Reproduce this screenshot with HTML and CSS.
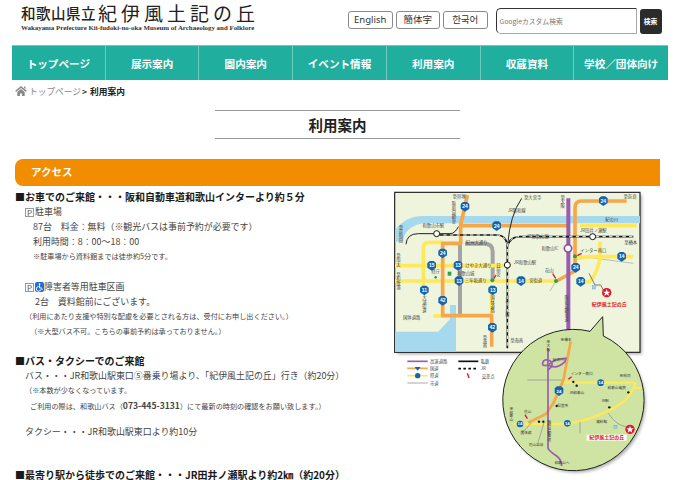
FILE: index.html
```html
<!DOCTYPE html>
<html lang="ja">
<head>
<meta charset="utf-8">
<title>利用案内</title>
<link rel="stylesheet" href="styles.css">
</head>
<body>
<header class="top">
  <div class="logo">
    <div class="logo-main"><span class="logo-pre">和歌山県立</span><span class="logo-name">紀伊風土記の丘</span></div>
    <div class="logo-sub">Wakayama Prefecture Kii-fudoki-no-oka Museum of Archaeology and Folklore</div>
  </div>
  <div class="langs">
    <a class="lang">English</a>
    <a class="lang">簡体字</a>
    <a class="lang">한국어</a>
  </div>
  <div class="search">
    <div class="search-input">Googleカスタム検索</div>
    <div class="search-btn">検索</div>
  </div>
</header>
<nav class="nav">
  <a class="nav-item">トップページ</a>
  <a class="nav-item">展示案内</a>
  <a class="nav-item">園内案内</a>
  <a class="nav-item">イベント情報</a>
  <a class="nav-item">利用案内</a>
  <a class="nav-item">収蔵資料</a>
  <a class="nav-item">学校／団体向け</a>
</nav>
<div class="crumbs">
  <svg class="home" viewBox="0 0 12 10"><path d="M6 0 L12 5 L10.6 5.8 L6 2 L1.4 5.8 L0 5 Z M2.3 6 L6 3 L9.7 6 L9.7 10 L7 10 L7 7.5 L5 7.5 L5 10 L2.3 10 Z M9 .6 H10.4 V3 L9 1.9 Z"/></svg>
  <span class="crumb-link">トップページ</span><span class="crumb-sep">&gt;</span><strong class="crumb-now">利用案内</strong>
</div>
<h1 class="title">利用案内</h1>
<h2 class="bar">アクセス</h2>
<main class="row">
  <div class="text">
    <h3 class="head">■お車でのご来館・・・阪和自動車道和歌山インターより約５分</h3>
    <p class="line in1"><span class="pk">P</span>駐車場</p>
    <p class="line in2">87台　料金：無料（※観光バスは事前予約が必要です）</p>
    <p class="line in2">利用時間：8：00～18：00</p>
    <p class="line in2 small">※駐車場から資料館までは徒歩約5分です。</p>
    <p class="line in1 gap"><span class="pk">P</span><span class="wc"><svg class="wc-ico" viewBox="0 0 10 10"><circle cx="5" cy="1.7" r="1"/><path class="wc-line" d="M5 3 V6 H7.3 L8 8.3 M4 4.5 A2.6 2.6 0 1 0 6.6 7.6"/></svg></span>障害者等用駐車区画</p>
    <p class="line in2">&nbsp;2台　資料館前にございます。</p>
    <p class="line in1 small">（利用にあたり支援や特別な配慮を必要とされる方は、受付にお申し出ください。）</p>
    <p class="line in3 small">（※大型バス不可。こちらの事前予約は承っておりません。）</p>
    <h3 class="head sec">■バス・タクシーでのご来館</h3>
    <p class="line in1">バス・・・JR和歌山駅東口⑤番乗り場より、「紀伊風土記の丘」行き（約20分）</p>
    <p class="line in1 small">（※本数が少なくなっています。</p>
    <p class="line in3 small">ご利用の際は、和歌山バス（<b class="tel">073-445-3131</b>）にて最新の時刻の確認をお願い致します。）</p>
    <p class="line in1 gap2">タクシー・・・JR和歌山駅東口より約10分</p>
    <h3 class="head sec2">■最寄り駅から徒歩でのご来館・・・JR田井ノ瀬駅より約2㎞（約20分）</h3>
  </div>
  <svg class="map" viewBox="0 3 870 885" role="img" aria-label="アクセスマップ">
    <defs>
      <polygon id="hx" points="-13,-8 -6,-14 6,-14 13,-8 13,6 0,15 -13,6"/>
      <filter id="soft" x="-20%" y="-20%" width="140%" height="140%"><feGaussianBlur stdDeviation="5"/></filter>
    </defs>
    <rect class="shadow" x="22" y="30" width="734" height="478" filter="url(#soft)"/>
    <rect class="land" x="14" y="22" width="736" height="480"/>
    <path class="water" d="M15 170 V135 C35 110 60 93 100 93 H750 V115 H100 C70 118 40 140 40 170 Z"/>
    <path class="water" d="M15 440 H145 L180 402 V360 H198 V500 H15 Z"/>
    <g class="rd grey">
      <path d="M210 175 V392"/>
      <path d="M225 176 H285 Q308 176 308 200 V285"/>
      <path class="thin" d="M580 215 L730 235"/>
      <path class="thin" d="M480 318 L500 285"/>
    </g>
    <g class="rd yel">
      <path d="M15 242 H350"/>
      <path d="M15 288 H500"/>
      <path d="M100 320 V190 Q100 172 118 172 H160"/>
      <path d="M130 393 H160"/>
      <path d="M552 220 L600 215 H730"/>
      <path d="M630 170 V215 Q625 260 600 290 H572"/>
      <path d="M570 122 H740"/>
      <path d="M305 300 V392"/>
    </g>
    <g class="rd ora">
      <path d="M232 30 L212 120 V175 H158 V392 H305 V485"/>
      <path d="M212 122 H535"/>
      <path d="M710 48 H575 Q555 48 555 68 V258 L500 288"/>
    </g>
    <path class="rd pur" d="M535 40 V440"/>
    <path class="pvt" d="M48 178 Q50 146 85 146 H180 Q195 146 205 125"/>
    <path class="pvt" d="M395 40 Q360 90 353 180"/>
    <g class="jr">
      <path class="jr-b" d="M140 150 H320 Q352 150 352 190 V490"/>
      <path class="jr-b" d="M352 185 Q360 155 390 155 H730"/>
      <path class="jr-w" d="M140 150 H320 Q352 150 352 190 V490"/>
      <path class="jr-w" d="M352 185 Q360 155 390 155 H730"/>
    </g>
    <circle class="st" cx="140" cy="146" r="9"/>
    <circle class="st" cx="352" cy="240" r="9"/>
    <circle class="st" cx="608" cy="155" r="9"/>
    <circle class="ic" cx="534" cy="190" r="11"/>
    <g class="hexes">
      <use href="#hx" x="225" y="65"/><use href="#hx" x="320" y="123"/><use href="#hx" x="640" y="48"/>
      <use href="#hx" x="158" y="205"/><use href="#hx" x="125" y="242"/><use href="#hx" x="204" y="242"/>
      <use href="#hx" x="207" y="288"/><use href="#hx" x="393" y="288"/><use href="#hx" x="103" y="316"/>
      <use href="#hx" x="158" y="347"/><use href="#hx" x="308" y="316"/><use href="#hx" x="307" y="428"/>
      <use href="#hx" x="557" y="248"/><use href="#hx" x="572" y="290"/><use href="#hx" x="695" y="215"/>
    </g>
    <g class="hexn">
      <text x="225" y="70">24</text><text x="320" y="128">24</text><text x="640" y="53">24</text>
      <text x="158" y="210">24</text><text x="125" y="247">15</text><text x="204" y="247">13</text>
      <text x="207" y="293">13</text><text x="393" y="293">14</text><text x="103" y="321">11</text>
      <text x="158" y="352">42</text><text x="308" y="321">13</text><text x="307" y="433">42</text>
      <text x="557" y="253">24</text><text x="572" y="295">14</text><text x="695" y="220">14</text>
    </g>
    <circle class="gr" cx="555" cy="214" r="6"/><circle class="gr" cx="498" cy="288" r="6"/><circle class="gr" cx="307" cy="286" r="6"/>
    <rect class="gr" x="173" y="260" width="11" height="12"/><circle class="gr" cx="137" cy="277" r="4"/>
    <g class="red-m"><path d="M562 212 L575 205"/><path d="M497 280 L488 266"/><path d="M312 280 L318 270"/></g>
    <path class="gl" d="M597 265 L615 300 H632 L640 315"/>
    <rect class="pbx" x="607" y="302" width="10" height="10"/>
    <circle class="star-o" cx="650" cy="323" r="14"/>
    <polygon class="star-i" points="650,312 653,320 661,320 655,325 657,333 650,328 643,333 645,325 639,320 647,320"/>
    <g class="lb">
      <text x="207" y="38">至貝塚</text><text x="428" y="43">至大宮寺</text><text x="380" y="80">JR阪和線</text>
      <text x="665" y="108">紀の川</text><text x="130" y="125">和歌山市駅</text><text x="610" y="140">JR田井ノ瀬駅</text>
      <text x="442" y="160">JR和歌山線</text><text x="720" y="38">至奈良</text><text x="722" y="177">至橋本</text>
      <text x="480" y="194">和歌山IC</text><text x="610" y="202">インター南口</text><text x="405" y="236">JR和歌山駅</text>
      <text x="478" y="261">花山</text><text x="437" y="292">宮街道</text><text x="137" y="263">県庁</text>
      <text x="227" y="270">和歌山城</text><text x="265" y="246">けやき大通り</text><text x="257" y="290">三年坂通り</text>
      <text x="260" y="176">紀州大通り</text><text x="65" y="401">国体道路</text><text x="380" y="470">至海南</text>
    </g>
    <g class="vl">
      <text x="192" y="50">阪和自動車</text><text x="33" y="120">至岸和田</text><text x="25" y="205">至加太</text><text x="25" y="262">至和歌浦</text>
      <text x="103" y="332">大浦街道</text><text x="308" y="332">国体道路</text><text x="285" y="450">至海南</text>
      <text x="518" y="30">至大阪</text><text x="530" y="332">阪和自動車道</text><text x="352" y="330">きのくに線</text><text x="325" y="235">日前宮</text>
    </g>
    <text class="red-t" x="658" y="363">紀伊風土記の丘</text>
    <g transform="translate(0,405)">
      <g class="lg-p">
        <path class="lg1 p" d="M52 124 H113"/><path class="lg1 o" d="M52 145 H113"/><path class="lg1 y" d="M52 167 H113"/><path class="lg1 g" d="M52 189 H113"/>
        <path class="lg1 k" d="M205 124 H265"/><path class="lg1 d" d="M205 146 H265"/>
        <path class="red-leg" d="M232 160 L237 174"/>
      </g>
      <polygon class="hexs" points="74,141 92,141 83,152"/><circle class="hexs" cx="83" cy="167" r="8"/>
      <g class="lg-t">
        <text x="120" y="129">高速道路</text><text x="120" y="150">国道</text><text x="120" y="172">県道</text><text x="120" y="194">市道</text>
        <text x="272" y="129">私鉄</text><text x="272" y="151">JR</text><text x="275" y="173">交差点</text>
      </g>
      <circle class="shadow" cx="557" cy="248" r="210" filter="url(#soft)"/>
      <path class="bub" d="M600 34 L638 -10 L640 48 A212 212 0 1 1 600 34 Z"/>
      <g class="rd2 yel">
        <path d="M370 312 H520 Q570 310 650 275 Q700 255 725 215 Q735 200 735 188 H520"/>
        <path d="M735 204 H755"/>
      </g>
      <g class="rd2 gry">
        <path d="M412 180 H520"/><path d="M655 280 Q680 318 710 320"/><path d="M570 305 V340"/>
        <path d="M425 308 L395 340"/><path d="M462 308 L445 365"/>
      </g>
      <path class="rd2 ora2" d="M542 65 L520 180 L490 250 L468 282 L415 308"/>
      <g class="rd2 pur2">
        <path d="M474 85 V385 Q480 395 500 408 Q515 420 515 438"/>
        <path d="M474 135 Q455 140 458 128 Q462 115 480 122 Q495 135 474 150 M474 135 Q500 150 525 125 L528 115 Q495 115 474 135"/>
      </g>
      <g class="hexes">
        <circle cx="632" cy="188" r="10"/><circle cx="390" cy="312" r="10"/><circle cx="532" cy="310" r="10"/>
        <use href="#hx" x="507" y="213"/>
      </g>
      <g class="hexn sm">
        <text x="632" y="192">14</text><text x="390" y="316">14</text><text x="532" y="314">14</text><text x="507" y="218">24</text>
      </g>
      <g class="blk">
        <circle cx="550" cy="186" r="3.5"/><circle cx="560" cy="197" r="3.5"/><circle cx="500" cy="258" r="3.5"/><circle cx="658" cy="262" r="3.5"/>
        <circle cx="715" cy="217" r="3.5"/><circle cx="447" cy="305" r="3.5"/><circle cx="460" cy="305" r="3.5"/>
      </g>
      <g class="red-m"><path d="M535 178 L545 170"/><path d="M412 296 L405 284"/></g>
      <rect class="pbx" x="672" y="316" width="9" height="9"/>
      <g class="lb sm">
        <text x="528" y="63">至橋本</text><text x="505" y="122">紀の川</text><text x="575" y="164">インター南口</text>
        <text x="705" y="172">至粉河</text><text x="680" y="208">和歌山電鉄</text><text x="560" y="222">JR和歌山</text>
        <text x="518" y="261">県営所</text><text x="645" y="245">JR駅</text><text x="635" y="310">資料館</text><text x="413" y="278">花山</text>
        <text x="408" y="342">国体線</text><text x="438" y="379">花山温泉</text><text x="516" y="432">和歌山へ</text>
      </g>
      <g class="vl sm">
        <text x="475" y="60">至大阪</text><text x="364" y="260">至和歌山</text><text x="478" y="298">阪和自動車道</text>
      </g>
      <circle class="star-o" cx="720" cy="328" r="14"/>
      <polygon class="star-i" points="720,317 723,325 731,325 725,330 727,338 720,333 713,338 715,330 709,325 717,325"/>
      <rect class="lbl-bg" x="590" y="344" width="120" height="18"/>
      <text class="red-t" x="650" y="358">紀伊風土記の丘</text>
    </g>
  </svg>
</main>
</body>
</html>
```

FILE: styles.css
```css
html, body { margin: 0; padding: 0; height: 480px; overflow: hidden; background: #fff; }
body { font-family: "Noto Sans CJK JP", "Noto Sans", sans-serif; color: #333; }
p, h1, h2, h3 { margin: 0; }

.top { display: flex; height: 45px; align-items: flex-start; padding-left: 21px; box-sizing: border-box; }
.logo { width: 327px; padding-top: 3px; flex: none; }
.logo-main { display: flex; align-items: center; height: 20px; color: #222; white-space: nowrap; line-height: 20px; }
.logo-pre { font-size: 14.5px; font-weight: 500; letter-spacing: .5px; width: 77px; }
.logo-name { font-size: 19px; letter-spacing: 4px; font-weight: 400; }
.logo-sub { font-family: "Liberation Serif", serif; font-weight: 700; font-size: 6.9px; line-height: 8px; margin-top: 1px; color: #333; white-space: nowrap; }

.langs { display: flex; gap: 3px; margin-top: 11px; flex: none; }
.lang { width: 44.5px; height: 18px; box-sizing: border-box; border: 1px solid #8a8a8a; border-radius: 3px; font-size: 9.5px; line-height: 16px; text-align: center; color: #333; font-family: "Noto Sans", "Noto Sans CJK JP", sans-serif; }
.search { display: flex; gap: 3px; margin: 8px 0 0 8px; flex: none; }
.search-input { width: 141px; height: 26px; box-sizing: border-box; border: 1px solid #aaa; border-top-color: #333; border-left-color: #333; border-radius: 5px 0 0 5px; font-size: 6.8px; line-height: 24px; padding-left: 3px; color: #777; }
.search-btn { width: 22px; height: 25px; margin-top: 1px; background: #2b2b2b; border-radius: 3px; color: #fff; font-size: 6.8px; font-weight: 700; line-height: 25px; text-align: center; }

.nav { display: grid; grid-template-columns: repeat(7, 1fr); width: 656px; height: 35px; margin-left: 12px; background: #20ae9f; border-top: 1px solid #6fcabf; box-sizing: border-box; }
.nav-item { display: flex; align-items: center; justify-content: center; color: #fff; font-size: 10.6px; font-weight: 700; border-right: 1px solid #6fcabf; white-space: nowrap; }
.nav-item:last-child { border-right: 0; }

.crumbs { display: flex; align-items: center; height: 22px; padding-left: 15px; font-size: 8.7px; }
.home { width: 12px; height: 10px; fill: #888; margin-right: 2px; }
.crumb-link { color: #888; }
.crumb-sep { margin: 0 3px 0 1px; color: #333; font-weight: 700; }
.crumb-now { color: #222; }

.title { width: 245px; height: 29px; margin: 8px 0 0 215px; box-sizing: border-box; border-top: 1px solid #999; border-bottom: 1px solid #999; font-size: 14.5px; line-height: 27px; text-align: center; font-weight: 700; color: #222; }

.bar { width: 645px; height: 27px; margin: 20px 0 0 15px; box-sizing: border-box; padding-left: 16px; background: #f28c00; border-radius: 8px 0 0 8px; color: #fff; font-size: 10.5px; font-weight: 700; line-height: 26px; }

.row { display: flex; }
.text { width: 390px; flex: none; padding: 3px 0 0 15px; box-sizing: border-box; }
.map { width: 290px; height: 295px; flex: none; }

.head { font-size: 10px; font-weight: 700; line-height: 15px; color: #1a1a1a; white-space: nowrap; }
.line { font-size: 8.95px; line-height: 15px; height: 15px; white-space: nowrap; color: #444; }
.small { font-size: 7.15px; }
.in1 { padding-left: 10px; }
.in2 { padding-left: 18px; }
.in3 { padding-left: 15px; }
.gap { margin-top: 15px; }
.gap2 { margin-top: 11px; }
.sec { margin-top: 14px; }
.sec2 { margin-top: 31px; line-height: 10px; }
.tel { font-size: 8.6px; }
.pk { display: inline-block; width: 9px; height: 9px; margin-right: 1px; border: 1px solid #999; box-sizing: border-box; font-size: 8px; line-height: 7px; text-align: center; vertical-align: -1px; color: #555; }
.wc { display: inline-block; width: 9px; height: 10px; border-radius: 2px; background: #1f6fd6; vertical-align: -2px; }
.wc-ico { display: block; width: 9px; height: 10px; fill: #fff; }
.wc-line { fill: none; stroke: #fff; stroke-width: 1; }

.land { fill: #eff5dc; stroke: #222; stroke-width: 3.5; }
.shadow { fill: #555; opacity: .45; }
.water { fill: #a6d8ee; }
.rd path { fill: none; stroke-linejoin: round; }
.grey path { stroke: #a3a3a3; stroke-width: 12; }
.grey .thin { stroke-width: 2; }
.yel path { stroke: #ffe95a; stroke-width: 11; }
.ora path { stroke: #f7a64a; stroke-width: 11; }
.pur { fill: none; stroke: #9a5cb0; stroke-width: 12; }
.pvt { fill: none; stroke: #222; stroke-width: 3; }
.jr-b { fill: none; stroke: #111; stroke-width: 5; }
.jr-w { fill: none; stroke: #fff; stroke-width: 3; stroke-dasharray: 10 10; }
.st { fill: #fff; stroke: #111; stroke-width: 3; }
.ic { fill: #fff; stroke: #8d4fa6; stroke-width: 5; }
.hexes { fill: #1565ae; }
.hexs { fill: #1565ae; }
.hexn text { fill: #fff; font-family: "Liberation Sans", sans-serif; font-size: 15px; font-weight: 700; text-anchor: middle; }
.hexn.sm text { font-size: 13px; }
.gr { fill: #2ba04a; }
.red-m path { fill: none; stroke: #e3142d; stroke-width: 4; }
.gl { fill: none; stroke: #777; stroke-width: 3; }
.pbx { fill: #9cd3ee; stroke: #4a90c0; stroke-width: 1; }
.star-o { fill: #e3142d; }
.star-i { fill: #fff; }
.lb text { font-size: 13px; fill: #444; text-anchor: middle; }
.lb.sm text { font-size: 11px; fill: #333; }
.vl text { font-size: 13px; fill: #444; writing-mode: vertical-rl; text-anchor: start; }
.vl.sm text { font-size: 11px; fill: #333; }
.red-t { font-size: 15px; font-weight: 700; fill: #e3142d; text-anchor: middle; }
.lg1 { fill: none; stroke-width: 5; }
.lg1.p { stroke: #9a5cb0; }
.lg1.o { stroke: #f7a64a; }
.lg1.y { stroke: #ffe95a; }
.lg1.g { stroke: #aaa; stroke-width: 3; }
.lg1.k { stroke: #111; }
.lg1.d { stroke: #111; stroke-dasharray: 8 7; }
.red-leg { fill: none; stroke: #e3142d; stroke-width: 4; }
.lg-t text { font-size: 13px; fill: #444; }
.bub { fill: #cfe3a2; stroke: #222; stroke-width: 3; }
.rd2 path { fill: none; }
.rd2.yel path { stroke: #ffe95a; stroke-width: 7; }
.gry path { stroke: #999; stroke-width: 2.5; }
.ora2 { fill: none; stroke: #f7a64a; stroke-width: 8; }
.pur2 path { stroke: #9a5cb0; stroke-width: 5; }
.blk { fill: #111; }
.lbl-bg { fill: #fff; }
```
